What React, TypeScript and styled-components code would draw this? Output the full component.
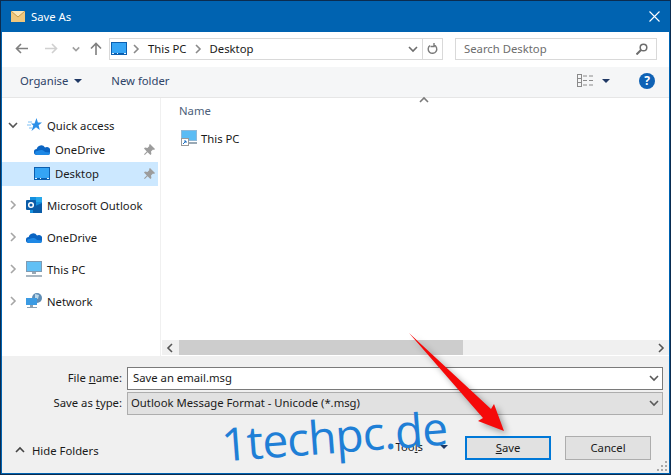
import styled, { createGlobalStyle } from "styled-components";

const Global = createGlobalStyle`
  html, body { margin: 0; padding: 0; background: #0b2c50; }
  * { box-sizing: border-box; }
`;

const Window = styled.div`
  position: relative;
  width: 671px;
  height: 475px;
  display: flex;
  flex-direction: column;
  overflow: hidden;
  padding: 1px;
  background: #0b2c50;
  font-family: "Noto Sans", "Open Sans", sans-serif;
  font-size: 11.3px;
  color: #1a1a1a;
`;

const Inner = styled.div`
  flex: 1;
  display: flex;
  flex-direction: column;
  border: 1px solid #0063b1;
  border-top: none;
  min-height: 0;
`;

const TitleBar = styled.div`
  height: 31px;
  background: #0063b1;
  color: #fff;
  display: flex;
  align-items: center;
  padding: 0 9px;
  gap: 6px;
  flex-shrink: 0;
`;

const Title = styled.span`
  flex: 1;
`;

const NavBar = styled.div`
  height: 35px;
  background: #fff;
  display: flex;
  align-items: center;
  padding: 2px 12px 4px;
  flex-shrink: 0;
`;

const NavButtons = styled.div`
  width: 94px;
  margin-left: 1px;
  display: grid;
  grid-template-columns: 30px 27px 18px 12px;
  align-items: center;
`;

const AddressBox = styled.div`
  width: 334px;
  height: 22px;
  border: 1px solid #d9d9d9;
  display: flex;
  align-items: center;
  padding-left: 1px;
`;

const Crumb = styled.span<{ $first?: boolean }>`
  display: flex;
  margin: 0 7px 0 ${(p) => (p.$first ? 4 : 6)}px;
`;

const AddressSpacer = styled.div`
  flex: 1;
`;

const RefreshCell = styled.div`
  width: 20px;
  height: 100%;
  border-left: 1px solid #d9d9d9;
  margin-left: 4px;
  display: flex;
  align-items: center;
  justify-content: center;
`;

const SearchBox = styled.div`
  width: 202px;
  height: 22px;
  margin-left: 12px;
  border: 1px solid #d9d9d9;
  display: flex;
  align-items: center;
  justify-content: space-between;
  padding: 0 8px;
  color: #6d6d6d;
`;

const Toolbar = styled.div`
  height: 31px;
  background: #f5f6f7;
  border-bottom: 1px solid #e6e6e6;
  display: flex;
  align-items: center;
  padding: 0 10px 3px 18px;
  flex-shrink: 0;
  color: #2f4468;
`;

const ToolItem = styled.span`
  display: flex;
  align-items: center;
  gap: 6px;
  margin-right: 29px;
`;

const ToolEnd = styled.div`
  margin-left: auto;
  display: flex;
  align-items: center;
  gap: 9px;
`;

const Caret = styled.span`
  width: 0;
  height: 0;
  border-left: 4px solid transparent;
  border-right: 4px solid transparent;
  border-top: 4px solid #1f3864;
`;

const HelpBadge = styled.span`
  width: 16px;
  height: 16px;
  border-radius: 50%;
  background: #0f62b5;
  color: #fff;
  font-weight: 700;
  font-size: 12px;
  margin-left: 20px;
  margin-right: 4px;
  display: flex;
  align-items: center;
  justify-content: center;
`;

const Main = styled.div`
  flex: 1;
  display: flex;
  min-height: 0;
  background: #fff;
`;

const Sidebar = styled.div`
  width: 159px;
  border-right: 1px solid #f0f0f0;
  padding: 16px 2px 0 0;
  flex-shrink: 0;
`;

const NavGroup = styled.div`
  margin-bottom: 8px;
`;

const NavRow = styled.div<{ $depth?: number; $selected?: boolean }>`
  height: 24px;
  display: flex;
  align-items: center;
  padding-left: ${(p) => (p.$depth ? 32 : 6)}px;
  padding-bottom: 2px;
  background: ${(p) => (p.$selected ? "#cce8ff" : "transparent")};
`;

const Expander = styled.span`
  width: 18px;
  display: flex;
  align-items: center;
`;

const NavIcon = styled.span`
  width: 16px;
  height: 16px;
  margin-right: 5px;
  display: flex;
  align-items: center;
  justify-content: center;
`;

const PinSlot = styled.span`
  margin-left: auto;
  margin-right: 3px;
  display: flex;
`;

const Content = styled.div`
  flex: 1;
  display: flex;
  flex-direction: column;
  min-width: 0;
`;

const ListArea = styled.div`
  flex: 1;
  position: relative;
  padding: 4px 0 0 18px;
`;

const ColumnHead = styled.div`
  color: #4c607a;
  height: 17px;
  line-height: 17px;
`;

const SortMark = styled.span`
  position: absolute;
  top: -3px;
  left: 258px;
  display: flex;
`;

const FileRow = styled.div`
  display: flex;
  align-items: center;
  gap: 4px;
  margin-top: 10px;
  margin-left: 2px;
  height: 18px;
`;

const HScroll = styled.div`
  height: 15px;
  margin-bottom: 1px;
  margin-left: 1px;
  background: #f0f0f0;
  display: flex;
  align-items: center;
  justify-content: space-between;
  padding: 0 3px;
`;

const HThumb = styled.div`
  position: absolute;
  left: 179px;
  top: 340px;
  width: 284px;
  height: 15px;
  background: #cdcdcd;
`;

const Footer = styled.div`
  height: 117px;
  background: #f0f0f0;
  flex-shrink: 0;
  display: flex;
  flex-direction: column;
  padding: 11px 6px 0 0;
`;

const FormRow = styled.div`
  display: flex;
  align-items: center;
  height: 23px;
  margin-bottom: 2px;
`;

const FieldLabel = styled.div`
  width: 125px;
  text-align: right;
  padding: 0 5px 2px 0;
`;

const Key = styled.span`
  text-decoration: underline;
`;

const Field = styled.div<{ $filled?: boolean }>`
  flex: 1;
  height: 100%;
  border: 1px solid ${(p) => (p.$filled ? "#adadad" : "#7a7a7a")};
  background: ${(p) => (p.$filled ? "#e1e1e1" : "#fff")};
  display: flex;
  align-items: center;
  justify-content: space-between;
  padding: 0 3px 2px ${(p) => (p.$filled ? 3 : 5)}px;
`;

const ActionRow = styled.div`
  display: flex;
  align-items: center;
  margin-top: 19px;
  padding-left: 13px;
`;

const HideFolders = styled.div`
  display: flex;
  align-items: center;
  gap: 7px;
  margin-top: 4px;
`;

const ToolsMenu = styled.div`
  margin-left: auto;
  display: flex;
  align-items: center;
  gap: 17px;
  margin-right: 17px;
  padding-bottom: 3px;
`;

const DialogButton = styled.div<{ $primary?: boolean }>`
  width: 86px;
  height: 24px;
  border: ${(p) => (p.$primary ? "2px solid #0078d7" : "1px solid #adadad")};
  background: #e1e1e1;
  display: flex;
  align-items: center;
  justify-content: center;
  padding-bottom: 2px;
  margin-right: ${(p) => (p.$primary ? 14 : 12)}px;
`;

const Watermark = styled.div`
  position: absolute;
  left: 221px;
  top: 408px;
  font-family: "Open Sans", sans-serif;
  font-size: 46px;
  line-height: 54px;
  color: #1f7fd6;
  transform: rotate(-4.3deg);
  white-space: nowrap;
  letter-spacing: -0.9px;
`;

const Grip = styled.svg`
  position: absolute;
  right: 3px;
  bottom: 3px;
`;

const Arrow = styled.svg`
  position: absolute;
  left: 400px;
  top: 325px;
  filter: drop-shadow(3px 3px 3px rgba(0, 0, 0, 0.35));
`;

const Chevron = ({ dir, color = "#8a8a8a" }: { dir: "right" | "down" | "up" | "left"; color?: string }) => {
  const d = {
    right: "M3 1l4 4-4 4",
    down: "M1 3l4 4 4-4",
    up: "M1 7l4-4 4 4",
    left: "M7 1L3 5l4 4",
  }[dir];
  return (
    <svg width="10" height="10" viewBox="0 0 10 10" fill="none" stroke={color} strokeWidth="1.6">
      <path d={d} />
    </svg>
  );
};

const Monitor = () => (
  <svg width="16" height="13" viewBox="0 0 16 13">
    <rect width="16" height="13" fill="#0b5fb0" />
    <rect x="1" y="1" width="14" height="10" fill="#35a5f5" />
    <path d="M1 11h2v1H1zM6 11h1v1H6zM13 11h2v1h-2z" fill="#e8f4fd" />
  </svg>
);

const Cloud = () => (
  <svg width="16" height="11" viewBox="0 0 16 11">
    <path d="M3 11a3 3 0 0 1-.3-6A4.500 4.500 0 0 1 11 3.600 3.600 3.600 0 0 1 16 8.400 2.600 2.600 0 0 1 13.500 11z" fill="#0a64c2" />
    <path d="M3 11a2 2 0 0 1 0-4c1 0 5-3 8 1l5 .4A2.600 2.600 0 0 1 13.500 11z" fill="#1e88e5" />
  </svg>
);

const Pin = () => (
  <svg width="11" height="11" viewBox="0 0 11 11" fill="#9c9c9c">
    <path d="M6 0l5 5-1 1-1-.4L7 7.600 7.400 10l-1 1-2.800-2.800L.8 11 0 10.200l2.800-2.800L0 4.600l1-1 2.400.4L5.400 2 5 1z" />
  </svg>
);

const StarIcon = () => (
  <svg width="15" height="14" viewBox="0 0 15 14">
    <path d="M9.500 0l1.400 4.500H15l-3.400 2.800L12.800 12 9 9.200 4.500 13l1.800-5.500L4 5.500h3.500z" fill="#2b8fe8" />
    <path d="M1 4h4M0 7h4M2 10h3" stroke="#7cc0f5" strokeWidth="1" />
  </svg>
);

const OutlookIcon = () => (
  <svg width="16" height="16" viewBox="0 0 16 16">
    <rect x="4" y="0" width="12" height="16" fill="#1490df" />
    <rect x="10" y="0" width="6" height="5" fill="#28a8ea" />
    <path d="M7 10l9-4v10H7z" fill="#0a5ca8" />
    <rect x="0" y="3" width="10" height="10" rx="1" fill="#0a5ca8" />
    <circle cx="5" cy="8" r="2.300" fill="none" stroke="#fff" strokeWidth="1.500" />
  </svg>
);

const PcIcon = () => (
  <svg width="16" height="16" viewBox="0 0 16 16">
    <rect width="16" height="11" fill="#7f9bb3" />
    <rect x="1" y="1" width="14" height="9" fill="#62c0f5" />
    <rect x="6" y="11" width="4" height="2" fill="#9aa9b5" />
    <rect x="0" y="14" width="16" height="2" fill="#a9b6c0" />
  </svg>
);

const NetworkIcon = () => (
  <svg width="16" height="16" viewBox="0 0 16 16">
    <circle cx="11" cy="5" r="5" fill="#5f8db5" />
    <path d="M9 1l4 1-1 4-3-1z" fill="#b9d7ea" />
    <rect x="0" y="5" width="11" height="7" fill="#3b9be3" />
    <rect x="4" y="12" width="3" height="2" fill="#8aa0b2" />
    <rect x="1" y="14" width="10" height="1" fill="#8aa0b2" />
  </svg>
);

const PcShortcut = () => (
  <svg width="16" height="16" viewBox="0 0 16 16">
    <rect width="16" height="11" fill="#8fb9d8" />
    <rect x="1" y="1" width="14" height="9" fill="#5bbcf4" />
    <rect x="8" y="12" width="8" height="2" fill="#9aa9b5" />
    <rect x=".5" y="8.500" width="7" height="7" fill="#fff" stroke="#9a9a9a" strokeWidth="1" />
    <path d="M2 14l3-3M3 11h2v2" stroke="#1c6fc0" strokeWidth="1" fill="none" />
  </svg>
);

const places = [
  { name: "Microsoft Outlook", icon: <OutlookIcon /> },
  { name: "OneDrive", icon: <Cloud /> },
  { name: "This PC", icon: <PcIcon /> },
  { name: "Network", icon: <NetworkIcon /> },
];

export default function App() {
  return (
    <>
      <Global />
      <Window>
        <Inner>
          <TitleBar>
            <svg width="14" height="11" viewBox="0 0 14 11">
              <rect width="14" height="11" fill="#f0c77c" />
              <path d="M0 0l7 6 7-6" fill="#fbe6b8" stroke="#c99a4a" strokeWidth="1" />
            </svg>
            <Title>Save As</Title>
            <svg width="11" height="11" viewBox="0 0 11 11" stroke="#fff" strokeWidth="1.100">
              <path d="M.5.5l10 10M10.500.5l-10 10" />
            </svg>
          </TitleBar>
          <NavBar>
            <NavButtons>
              <svg width="13" height="11" viewBox="0 0 13 11" fill="none" stroke="#7f7f7f" strokeWidth="1.600">
                <path d="M13 5.500H1.500M6 1L1.500 5.500 6 10" />
              </svg>
              <svg width="13" height="11" viewBox="0 0 13 11" fill="none" stroke="#d0d0d0" strokeWidth="1.600">
                <path d="M0 5.500h11.500M7 1l4.500 4.500L7 10" />
              </svg>
              <svg width="8" height="8" viewBox="0 0 10 10" fill="none" stroke="#a0a0a0" strokeWidth="2">
                <path d="M1 3l4 4 4-4" />
              </svg>
              <svg width="12" height="13" viewBox="0 0 12 13" fill="none" stroke="#7f7f7f" strokeWidth="1.600">
                <path d="M6 13V1.500M1 6.500l5-5 5 5" />
              </svg>
            </NavButtons>
            <AddressBox>
              <Monitor />
              <Crumb $first>
                <Chevron dir="right" />
              </Crumb>
              <span>This PC</span>
              <Crumb>
                <Chevron dir="right" />
              </Crumb>
              <span>Desktop</span>
              <AddressSpacer />
              <Chevron dir="down" color="#6d6d6d" />
              <RefreshCell>
                <svg width="12" height="12" viewBox="0 0 12 12" fill="none" stroke="#7a7a7a" strokeWidth="1.400">
                  <path d="M3 2.500A4.300 4.300 0 1 0 7 2M7 0v3.500H3.500" />
                </svg>
              </RefreshCell>
            </AddressBox>
            <SearchBox>
              <span>Search Desktop</span>
              <svg width="12" height="12" viewBox="0 0 12 12" fill="none" stroke="#6d6d6d" strokeWidth="1.500">
                <circle cx="7.500" cy="4.500" r="3.300" />
                <path d="M5 7l-4.500 4.500" strokeWidth="2" />
              </svg>
            </SearchBox>
          </NavBar>
          <Toolbar>
            <ToolItem>
              Organise <Caret />
            </ToolItem>
            <ToolItem>New folder</ToolItem>
            <ToolEnd>
              <svg width="16" height="13" viewBox="0 0 16 13" fill="none" stroke="#8a8a8a">
                <rect x=".5" y=".5" width="4" height="12" />
                <path d="M.5 4.500h4M.5 8.500h4M6 2h4M12 2h4M6 6.500h4M12 6.500h4M6 11h4M12 11h4" />
              </svg>
              <Caret />
              <HelpBadge>?</HelpBadge>
            </ToolEnd>
          </Toolbar>
          <Main>
            <Sidebar>
              <NavGroup>
                <NavRow>
                  <Expander>
                    <Chevron dir="down" color="#555" />
                  </Expander>
                  <NavIcon>
                    <StarIcon />
                  </NavIcon>
                  Quick access
                </NavRow>
                <NavRow $depth={1}>
                  <NavIcon>
                    <Cloud />
                  </NavIcon>
                  OneDrive
                  <PinSlot>
                    <Pin />
                  </PinSlot>
                </NavRow>
                <NavRow $depth={1} $selected>
                  <NavIcon>
                    <Monitor />
                  </NavIcon>
                  Desktop
                  <PinSlot>
                    <Pin />
                  </PinSlot>
                </NavRow>
              </NavGroup>
              {places.map((item) => (
                <NavGroup key={item.name}>
                  <NavRow>
                    <Expander>
                      <Chevron dir="right" color="#a6a6a6" />
                    </Expander>
                    <NavIcon>{item.icon}</NavIcon>
                    {item.name}
                  </NavRow>
                </NavGroup>
              ))}
            </Sidebar>
            <Content>
              <ListArea>
                <ColumnHead>Name</ColumnHead>
                <SortMark>
                  <Chevron dir="up" color="#7a7a7a" />
                </SortMark>
                <FileRow>
                  <PcShortcut />
                  This PC
                </FileRow>
              </ListArea>
              <HScroll>
                <Chevron dir="left" color="#555" />
                <Chevron dir="right" color="#555" />
              </HScroll>
            </Content>
          </Main>
          <Footer>
            <FormRow>
              <FieldLabel>
                File <Key>n</Key>ame:
              </FieldLabel>
              <Field>
                Save an email.msg
                <Chevron dir="down" color="#5a5a5a" />
              </Field>
            </FormRow>
            <FormRow>
              <FieldLabel>
                Save as <Key>t</Key>ype:
              </FieldLabel>
              <Field $filled>
                Outlook Message Format - Unicode (*.msg)
                <Chevron dir="down" color="#5a5a5a" />
              </Field>
            </FormRow>
            <ActionRow>
              <HideFolders>
                <Chevron dir="up" color="#444" />
                Hide Folders
              </HideFolders>
              <ToolsMenu>
                <span>
                  Too<Key>l</Key>s
                </span>
                <Caret />
              </ToolsMenu>
              <DialogButton $primary>
                <span>
                  <Key>S</Key>ave
                </span>
              </DialogButton>
              <DialogButton>Cancel</DialogButton>
            </ActionRow>
          </Footer>
        </Inner>
        <HThumb />
        <Watermark>1techpc.de</Watermark>
        <Arrow width="115" height="115" viewBox="0 0 115 115">
          <path d="M9 8 L91 84 L94 79 L104 106 L78 96 L83 93 Z" fill="#f50a0a" />
        </Arrow>
        <Grip width="12" height="12" viewBox="0 0 12 12" fill="#a8a8a8">
          <rect x="9" y="1" width="2" height="2" />
          <rect x="5" y="5" width="2" height="2" />
          <rect x="9" y="5" width="2" height="2" />
          <rect x="1" y="9" width="2" height="2" />
          <rect x="5" y="9" width="2" height="2" />
          <rect x="9" y="9" width="2" height="2" />
        </Grip>
      </Window>
    </>
  );
}
